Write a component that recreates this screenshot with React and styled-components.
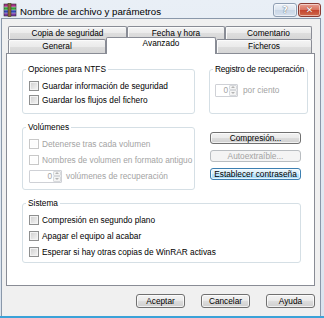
import styled, { createGlobalStyle } from 'styled-components';

const GlobalStyle = createGlobalStyle`
  html, body {
    margin: 0;
    padding: 0;
    background: #fff;
  }
  body {
    font-family: "Liberation Sans", Arial, sans-serif;
  }
`;

const Window = styled.div`
  width: 324px;
  height: 318px;
  box-sizing: border-box;
  display: flex;
  flex-direction: column;
  padding: 0 3px 0 1px;
  background: linear-gradient(#e9eff6, #dae3ee);
  border-bottom: 2px solid #3ba2d8;
`;

const TitleBar = styled.div`
  height: 18px;
  display: flex;
  align-items: flex-start;
  padding-left: 2px;
`;

const Title = styled.span`
  font-size: 9.7px;
  line-height: 11px;
  margin-top: 6px;
  margin-left: 3px;
  color: #000;
`;

const IconWrap = styled.div`
  margin-top: 3px;
  width: 14px;
  height: 14px;
`;

const Controls = styled.div`
  margin-left: auto;
  margin-top: 3px;
  display: flex;
  gap: 1px;
`;

const CaptionButton = styled.div`
  height: 12px;
  width: ${p => (p.$close ? 21 : 22)}px;
  border: 1px solid ${p => (p.$close ? '#8a3b33' : '#8f9eb2')};
  border-radius: 3px;
  box-sizing: content-box;
  display: flex;
  align-items: center;
  justify-content: center;
  font-family: "DejaVu Sans", sans-serif;
  font-weight: bold;
  font-size: 9px;
  line-height: 12px;
  color: #fff;
  background: ${p =>
    p.$close
      ? 'linear-gradient(#e8a093 0%, #d9735f 48%, #c4452f 52%, #cf6a4c 100%)'
      : 'linear-gradient(#eef3f9 0%, #dbe4ef 48%, #c9d6e6 52%, #d7e2ef 100%)'};
  text-shadow: ${p => (p.$close ? '0 0 1px #6b1b12' : '0 0 1px #5d6a7a, 0 0 1px #5d6a7a')};
  box-shadow: inset 0 0 0 1px rgba(255, 255, 255, 0.5);
`;

const Body = styled.div`
  flex: 1;
  display: flex;
  flex-direction: column;
  background: #f0f0f0;
  border: 1px solid #8a98aa;
  border-bottom: none;
  padding: 7px 5px 0 4px;
`;

const Tabs = styled.div`
  padding: 0 2px;
  display: flex;
  flex-direction: column;
`;

const TabRow = styled.div`
  display: flex;
  height: ${p => p.$h}px;
  align-items: flex-start;
`;

const Tab = styled.div`
  box-sizing: border-box;
  width: ${p => p.$w}px;
  height: ${p => (p.$active ? 17 : p.$h)}px;
  margin-top: ${p => (p.$active ? -2 : 0)}px;
  border: 1px solid #898c95;
  border-bottom: none;
  border-radius: 2px 2px 0 0;
  background: ${p =>
    p.$active ? '#fff' : 'linear-gradient(#f4f4f4 0%, #ebebeb 50%, #dedede 51%, #d6d6d6 100%)'};
  box-shadow: ${p => (p.$active ? 'none' : 'inset 1px 1px 0 #fbfbfb')};
  position: relative;
  z-index: ${p => (p.$active ? 2 : 0)};
  font-size: 8.3px;
  line-height: ${p => (p.$active ? 11 : p.$h - 1)}px;
  text-align: center;
  color: #000;
`;

const Page = styled.div`
  box-sizing: border-box;
  height: 233px;
  background: #fff;
  border: 1px solid #898c95;
  padding: 10px 0 0 15px;
  position: relative;
  z-index: 1;
`;

const Grid = styled.div`
  display: grid;
  grid-template-columns: 173px 99px;
  grid-template-rows: 50px 68px 65px;
  column-gap: 14px;
  row-gap: 8px;
`;

const Group = styled.fieldset`
  margin: 0;
  padding: 0;
  min-width: 0;
  box-sizing: border-box;
  border: 1px solid #d5dfe5;
  border-radius: 3px;
  ${p => (p.$w ? `width: ${p.$w}px;` : '')}
  ${p => (p.$span ? 'grid-column: 1 / span 2;' : '')}
`;

const Legend = styled.legend`
  margin-left: 3px;
  padding: 0 2px;
  font-size: 8.3px;
  line-height: 10px;
  color: #000;
  white-space: nowrap;
  letter-spacing: ${p => (p.$tight ? '-0.15px' : 'normal')};
`;

const GroupBody = styled.div`
  display: flex;
  flex-direction: column;
  gap: ${p => p.$gap || 0}px;
  padding: ${p => p.$pt}px 0 0 ${p => p.$pl}px;
`;

const Row = styled.div`
  display: flex;
  align-items: center;
  height: 14px;
  gap: ${p => p.$gap || 3}px;
  font-size: 8.3px;
  color: ${p => (p.$disabled ? '#a3a3a3' : '#000')};
  white-space: nowrap;
`;

const Box = styled.span`
  width: 10px;
  height: 10px;
  box-sizing: border-box;
  flex: none;
  border: 1px solid ${p => (p.$disabled ? '#c8c8c8' : '#8e8f8f')};
  background: ${p =>
    p.$disabled ? '#fdfdfd' : 'linear-gradient(135deg, #cdcdcd 0%, #e4e4e4 55%, #f7f7f7 100%)'};
  box-shadow: inset 0 0 0 1px ${p => (p.$disabled ? '#fff' : '#f3f3f3')};
`;

const Spin = styled.div`
  display: flex;
  width: ${p => p.$w}px;
  height: 13px;
  box-sizing: border-box;
  border: 1px solid #cfd1d6;
  border-radius: 1px;
  background: #fff;
`;

const SpinValue = styled.span`
  flex: 1;
  text-align: right;
  padding-right: 1px;
  font-size: 8.3px;
  line-height: 11px;
  color: #a3a3a3;
`;

const SpinArrows = styled.div`
  width: 8px;
  display: flex;
  flex-direction: column;
`;

const Arrow = styled.span`
  flex: 1;
  display: flex;
  align-items: center;
  justify-content: center;
  border: 1px solid #d8dadd;
  border-radius: 1px;
  background: #f4f4f4;
  &::after {
    content: '';
    border-left: 2px solid transparent;
    border-right: 2px solid transparent;
    ${p => (p.$down ? 'border-top' : 'border-bottom')}: 2px solid #b4b4b4;
  }
`;

const ButtonStack = styled.div`
  display: flex;
  flex-direction: column;
  gap: 6px;
  padding: 10px 0 0 1px;
`;

const Button = styled.div`
  box-sizing: border-box;
  width: ${p => p.$w}px;
  height: ${p => p.$h}px;
  border: 1px solid ${p => (p.$focus ? '#3c7fb1' : p.$disabled ? '#b9bdc1' : '#707070')};
  border-radius: 3px;
  background: ${p =>
    p.$focus
      ? 'linear-gradient(#eaf6fd 0%, #d9f0fc 45%, #bee6fd 50%, #a7d9f5 100%)'
      : p.$disabled
      ? '#f4f4f4'
      : 'linear-gradient(#f2f2f2 0%, #ebebeb 45%, #dddddd 50%, #cfcfcf 100%)'};
  box-shadow: inset 0 0 0 1px ${p => (p.$disabled ? '#f4f4f4' : 'rgba(255,255,255,0.7)')};
  display: flex;
  align-items: center;
  justify-content: center;
  font-size: 8.3px;
  color: ${p => (p.$disabled ? '#a3a3a3' : '#000')};
  white-space: nowrap;
`;

const Footer = styled.div`
  display: flex;
  justify-content: flex-end;
  gap: 16px;
  margin-top: 8px;
`;

function WinRarIcon() {
  return (
    <svg width="14" height="14" viewBox="0 0 14 14">
      <rect x="1" y="1" width="12" height="3" fill="#a8328a" />
      <rect x="1" y="4" width="12" height="3" fill="#33a23c" />
      <rect x="1" y="7" width="12" height="3" fill="#3247b8" />
      <rect x="1" y="10" width="12" height="3" fill="#7a3aa8" />
      <rect x="1" y="1" width="12" height="12" fill="none" stroke="#2d2d2d" strokeWidth="0.6" />
      <line x1="1" y1="4" x2="13" y2="4" stroke="#e8e8e8" strokeWidth="0.5" />
      <line x1="1" y1="7" x2="13" y2="7" stroke="#e8e8e8" strokeWidth="0.5" />
      <line x1="1" y1="10" x2="13" y2="10" stroke="#e8e8e8" strokeWidth="0.5" />
      <rect x="5" y="0.5" width="3" height="13" fill="#8a6a3a" stroke="#3d2d17" strokeWidth="0.5" />
    </svg>
  );
}

function Check({ label, disabled }) {
  return (
    <Row $disabled={disabled}>
      <Box $disabled={disabled} />
      {label}
    </Row>
  );
}

function Spinner({ width, value }) {
  return (
    <Spin $w={width}>
      <SpinValue>{value}</SpinValue>
      <SpinArrows>
        <Arrow />
        <Arrow $down />
      </SpinArrows>
    </Spin>
  );
}

export default function App() {
  return (
    <>
      <GlobalStyle />
      <Window>
        <TitleBar>
          <IconWrap>
            <WinRarIcon />
          </IconWrap>
          <Title>Nombre de archivo y parámetros</Title>
          <Controls>
            <CaptionButton>?</CaptionButton>
            <CaptionButton $close>✕</CaptionButton>
          </Controls>
        </TitleBar>

        <Body>
          <Tabs>
            <TabRow $h={13}>
              <Tab $w={119} $h={13}>Copia de seguridad</Tab>
              <Tab $w={98} $h={13}>Fecha y hora</Tab>
              <Tab $w={87} $h={13}>Comentario</Tab>
            </TabRow>
            <TabRow $h={14}>
              <Tab $w={98} $h={14}>General</Tab>
              <Tab $w={110} $h={14} $active>Avanzado</Tab>
              <Tab $w={96} $h={14}>Ficheros</Tab>
            </TabRow>
          </Tabs>

          <Page>
            <Grid>
              <Group>
                <Legend>Opciones para NTFS</Legend>
                <GroupBody $pt={5} $pl={6}>
                  <Check label="Guardar información de seguridad" />
                  <Check label="Guardar los flujos del fichero" />
                </GroupBody>
              </Group>

              <Group>
                <Legend $tight>Registro de recuperación</Legend>
                <GroupBody $pt={9} $pl={5}>
                  <Row $disabled $gap={5}>
                    <Spinner width={23} value="0" />
                    por ciento
                  </Row>
                </GroupBody>
              </Group>

              <Group>
                <Legend>Volúmenes</Legend>
                <GroupBody $pt={5} $pl={6} $gap={2}>
                  <Check label="Detenerse tras cada volumen" disabled />
                  <Check label="Nombres de volumen en formato antiguo" disabled />
                  <Row $disabled $gap={4}>
                    <Spinner width={33} value="0" />
                    volúmenes de recuperación
                  </Row>
                </GroupBody>
              </Group>

              <ButtonStack>
                <Button $w={91} $h={12}>Compresión...</Button>
                <Button $w={91} $h={12} $disabled>Autoextraíble...</Button>
                <Button $w={91} $h={12} $focus>Establecer contraseña</Button>
              </ButtonStack>

              <Group $span $w={279}>
                <Legend>Sistema</Legend>
                <GroupBody $pt={5} $pl={6} $gap={2}>
                  <Check label="Compresión en segundo plano" />
                  <Check label="Apagar el equipo al acabar" />
                  <Check label="Esperar si hay otras copias de WinRAR activas" />
                </GroupBody>
              </Group>
            </Grid>
          </Page>

          <Footer>
            <Button $w={49} $h={14}>Aceptar</Button>
            <Button $w={49} $h={14}>Cancelar</Button>
            <Button $w={49} $h={14}>Ayuda</Button>
          </Footer>
        </Body>
      </Window>
    </>
  );
}
